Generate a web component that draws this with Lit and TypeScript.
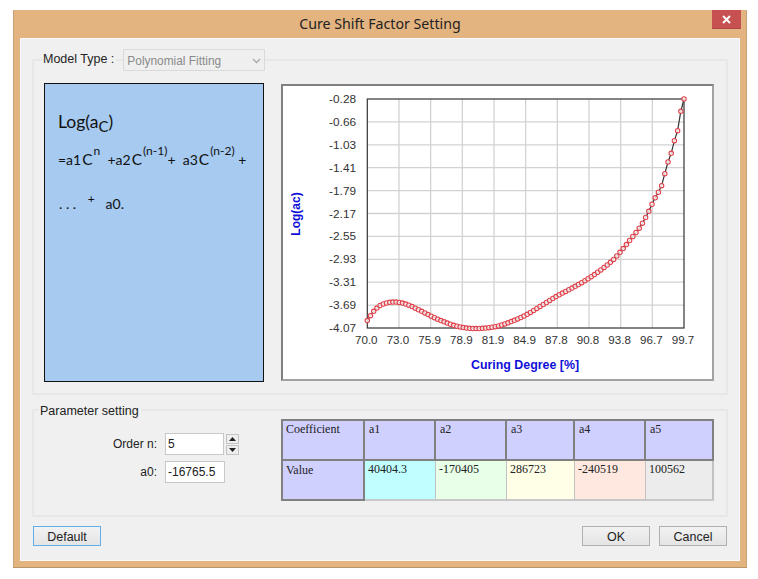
import { html, svg, css, LitElement } from 'lit';
import { customElement } from 'lit/decorators.js';

// curve read off the chart, in page pixels
const KEYS: [number, number][] = [
  [367, 321], [374, 311], [382, 304.5], [395, 302], [407, 304.5], [420, 310.5], [433, 317], [447, 323],
  [460, 327], [473, 328.5], [486, 328], [500, 325.5], [523, 316.5], [540, 306.5], [557, 296], [574, 287], [590, 277.5],
  [602, 269], [613, 260], [622, 250], [630, 240], [640, 227], [648, 213], [654, 200], [658, 193], [662, 184.5],
  [667, 165], [671, 154], [674, 142], [678, 129], [680, 115], [684, 99],
];

function curveY(x: number) {
  let i = 0;
  while (i < KEYS.length - 2 && x > KEYS[i + 1][0]) i++;
  const [x0, y0] = KEYS[i];
  const [x1, y1] = KEYS[i + 1];
  const prev = KEYS[Math.max(i - 1, 0)];
  const next = KEYS[Math.min(i + 2, KEYS.length - 1)];
  const m0 = (y1 - prev[1]) / (x1 - prev[0]);
  const m1 = (next[1] - y0) / (next[0] - x0);
  const h = x1 - x0;
  const t = (x - x0) / h;
  return (2 * t ** 3 - 3 * t ** 2 + 1) * y0 + (t ** 3 - 2 * t ** 2 + t) * h * m0
    + (-2 * t ** 3 + 3 * t ** 2) * y1 + (t ** 3 - t ** 2) * h * m1;
}

const POINTS = Array.from({ length: 100 }, (_, i) => {
  const x = 367.3 + (i * 316.7) / 99;
  return [x, curveY(x)];
});

const Y_LABELS = ['-0.28', '-0.66', '-1.03', '-1.41', '-1.79', '-2.17', '-2.55', '-2.93', '-3.31', '-3.69', '-4.07'];
const X_LABELS = ['70.0', '73.0', '75.9', '78.9', '81.9', '84.9', '87.8', '90.8', '93.8', '96.7', '99.7'];
const LEFT = 367.3, RIGHT = 684, TOP = 99, BOTTOM = 328;
const yAt = (i: number) => TOP + (i * (BOTTOM - TOP)) / 10;
const xAt = (i: number) => LEFT + (i * (RIGHT - LEFT)) / 10;

@customElement('app-root')
export class AppRoot extends LitElement {
  static styles = css`
    :host {
      display: block;
      width: 758px;
      height: 579px;
      box-sizing: border-box;
      padding: 10px 11px 11px 13px;
      background: #fff;
      font-family: "Liberation Sans", Arial, sans-serif;
      font-size: 12.5px;
      color: #222;
    }
    .window {
      height: 100%;
      display: flex;
      flex-direction: column;
      background: #e3b480;
      box-shadow: inset 0 -1px 0 #b8966c, inset 1px 0 0 #c9a274, inset -1px 0 0 #c9a274;
    }
    .titlebar {
      display: grid;
      grid-template-columns: 1fr auto 1fr;
      height: 28px;
      flex: none;
    }
    .title {
      grid-column: 2;
      font-family: "Noto Sans", sans-serif;
      font-size: 14.2px;
      line-height: 28px;
      color: #222;
    }
    .close {
      grid-column: 3;
      justify-self: end;
      width: 29px;
      height: 19px;
      margin-right: 6px;
      background: #c75050;
      border-bottom: 1px solid #b04545;
      box-sizing: border-box;
      display: flex;
      align-items: center;
      justify-content: center;
    }
    .body {
      flex: 1;
      margin: 0 7px 7px;
      padding: 20px 11px 0;
      background: #f0f0f0;
      border: 1px solid #fafafa;
      display: flex;
      flex-direction: column;
    }
    .group {
      border: 2px solid #e7e7e7;
      box-sizing: border-box;
      width: 696px;
    }
    .model {
      height: 336px;
      padding-left: 10px;
    }
    .legend {
      display: flex;
      align-items: center;
      height: 22px;
      margin-top: -12px;
    }
    .legend label {
      background: #f0f0f0;
      margin-left: -1px;
      padding: 0 2px 3px 0;
      margin-right: 7px;
      line-height: 16px;
    }
    .select {
      width: 142px;
      height: 22px;
      box-sizing: border-box;
      border: 1px solid #dadada;
      background: #efefef;
      color: #8a8a8a;
      padding: 2px 0 0 3px;
      display: flex;
      align-items: center;
      justify-content: space-between;
      font-size: 11.9px;
    }
    .select svg {
      margin-right: 3px;
    }
    .model-row {
      display: flex;
      align-items: center;
      gap: 17px;
      margin-top: 12px;
    }
    .formula {
      width: 220px;
      height: 299px;
      box-sizing: border-box;
      border: 1px solid #111;
      background: #a6caf0;
      padding: 26px 0 0 13px;
      font-family: Lato, "Noto Sans", sans-serif;
      color: #111;
    }
    .log {
      font-size: 17.5px;
      line-height: 24px;
    }
    .log sub {
      font-size: 15px;
      vertical-align: -4px;
      line-height: 0;
    }
    .line {
      font-size: 14px;
      white-space: pre;
      line-height: 20px;
      margin-top: 15px;
    }
    .line.last {
      margin-top: 24px;
      padding-left: 1px;
    }
    .line b {
      font-weight: 400;
      font-size: 15.5px;
      margin-left: 1px;
    }
    .line sup {
      font-size: 12px;
      line-height: 0;
      vertical-align: 10px;
      margin-left: 1px;
    }
    .line.last sup {
      vertical-align: 6px;
    }
    .chart {
      width: 433px;
      height: 297px;
      box-sizing: border-box;
      border: 2px solid #8c8c8c;
      border-color: #808080 #a2a2a2 #a2a2a2 #808080;
      background: #fff;
    }
    .chart svg {
      display: block;
      font-family: "Liberation Sans", Arial, sans-serif;
    }
    .param {
      height: 108px;
      margin-top: 14px;
      padding-top: 8px;
    }
    .param-legend {
      width: fit-content;
      height: 16px;
      line-height: 16px;
      margin: -16px 0 0 4px;
      padding: 0 2px;
      background: #f0f0f0;
    }
    .param-row {
      display: flex;
    }
    .fields {
      display: grid;
      grid-template-columns: 123px 60px auto;
      grid-auto-rows: 22px;
      row-gap: 6px;
      column-gap: 8px;
      width: 247px;
      margin-top: 14px;
      flex: none;
      align-items: center;
      align-self: flex-start;
      text-align: right;
      font-size: 12px;
    }
    .fields input {
      width: 60px;
      height: 22px;
      box-sizing: border-box;
      border: 1px solid #c8c8c8;
      padding: 0 2px;
      margin: 0;
      font: inherit;
      color: #222;
      background: #fff;
    }
    .fields input.short {
      width: 59px;
    }
    .spin {
      display: flex;
      flex-direction: column;
      gap: 1px;
      margin-left: -7px;
    }
    .spin span {
      width: 13px;
      height: 10px;
      box-sizing: border-box;
      border: 1px solid #c4c4c4;
      background: #eee;
      display: flex;
      align-items: center;
      justify-content: center;
    }
    .table {
      display: grid;
      grid-template-columns: 82px 71px 71px 68px 71px 68px;
      grid-template-rows: 40px 40px;
      width: 433px;
      height: 82px;
      flex: none;
      box-sizing: border-box;
      border-left: 2px solid #808080;
      border-top: 2px solid #808080;
      font-family: "Liberation Serif", "Times New Roman", serif;
      font-size: 12px;
      color: #222;
    }
    .cell {
      padding: 1px 4px;
      border-right: 2px solid #808080;
      border-bottom: 2px solid #808080;
      background: #d0d0ff;
      box-sizing: border-box;
      line-height: 14px;
    }
    .cell.head {
      padding-left: 3px;
    }
    .cell.row-head {
      padding: 2px 3px;
    }
    .cell.val {
      padding: 1px 3px;
      border-right: 1px solid #c2c2c2;
      border-bottom: 2px solid #c8c8c8;
    }
    .cell.val:last-child {
      border-right-width: 2px;
    }
    .actions {
      display: flex;
      gap: 9px;
      margin: 9px 1px 0;
    }
    .actions button {
      width: 68px;
      height: 20px;
      box-sizing: border-box;
      padding: 1px 0 0;
      border: 1px solid #b0b0b0;
      background: linear-gradient(#f2f2f2, #e4e4e4);
      font: inherit;
      color: #222;
    }
    .actions button.default {
      border-color: #62aee8;
      margin-right: auto;
    }
  `;

  renderChart() {
    const line = POINTS.map((p) => p.join(',')).join(' ');
    return html`<svg width="429" height="293" viewBox="283 86 429 293">
      ${Y_LABELS.map((_, i) => i > 0 && i < 10
        ? svg`<line x1=${LEFT} x2=${RIGHT} y1=${yAt(i)} y2=${yAt(i)} stroke="#d2d2d2" stroke-width="1.3" />` : '')}
      ${X_LABELS.map((_, i) => i > 0 && i < 10
        ? svg`<line x1=${xAt(i)} x2=${xAt(i)} y1=${TOP} y2=${BOTTOM} stroke="#d2d2d2" stroke-width="1.3" />` : '')}
      <rect x=${LEFT} y=${TOP} width=${RIGHT - LEFT} height=${BOTTOM - TOP} fill="none" stroke="#333" stroke-width="1.2" />
      ${Y_LABELS.map((t, i) => svg`<text x="356" y=${yAt(i) + 4} text-anchor="end" font-size="11.8" fill="#333">${t}</text>`)}
      ${X_LABELS.map((t, i) => svg`<text x=${xAt(i) - 1} y="344" text-anchor="middle" font-size="11.6" fill="#333">${t}</text>`)}
      <polyline points=${line} fill="none" stroke="#333" stroke-width="1.2" />
      ${POINTS.map(([x, y]) => svg`<circle cx=${x} cy=${y} r="2.2" fill="#fff" fill-opacity="0.8" stroke="#e0404a" stroke-width="1.1" />`)}
      <text x="525" y="369" text-anchor="middle" font-size="12.4" font-weight="700" fill="#0f0fd8">Curing Degree [%]</text>
      <text transform="translate(300 214) rotate(-90)" text-anchor="middle" font-size="12" font-weight="700" fill="#0f0fd8">Log(ac)</text>
    </svg>`;
  }

  render() {
    const values = [
      ['40404.3', '#c0ffff'],
      ['-170405', '#e8ffe8'],
      ['286723', '#ffffe8'],
      ['-240519', '#ffe8e0'],
      ['100562', '#ececec'],
    ];
    return html`
      <div class="window">
        <div class="titlebar">
          <div class="title">Cure Shift Factor Setting</div>
          <div class="close">
            <svg width="9" height="9" viewBox="0 0 9 9"><path d="M1 1L8 8M8 1L1 8" stroke="#fff" stroke-width="2" /></svg>
          </div>
        </div>
        <div class="body">
          <div class="group model">
            <div class="legend">
              <label>Model Type :</label>
              <div class="select">
                Polynomial Fitting
                <svg width="9" height="6" viewBox="0 0 9 6"><path d="M1 1L4.5 4.5L8 1" fill="none" stroke="#a8a8a8" stroke-width="1.3" /></svg>
              </div>
            </div>
            <div class="model-row">
              <div class="formula">
                <div class="log">Log(a<sub>C</sub>)</div>
                <div class="line">=a1<b>C</b><sup>n</sup>  +a2<b>C</b><sup>(n-1)</sup>+  a3<b>C</b><sup>(n-2)</sup> +</div>
                <div class="line last">. . .   <sup>+</sup>   a0.</div>
              </div>
              <div class="chart">${this.renderChart()}</div>
            </div>
          </div>
          <div class="group param">
            <div class="param-legend">Parameter setting</div>
            <div class="param-row">
              <div class="fields">
                <span>Order n:</span>
                <input class="short" value="5" />
                <div class="spin">
                  <span><svg width="7" height="4" viewBox="0 0 7 4"><path d="M3.5 0L7 4H0Z" fill="#222" /></svg></span>
                  <span><svg width="7" height="4" viewBox="0 0 7 4"><path d="M0 0H7L3.5 4Z" fill="#222" /></svg></span>
                </div>
                <span>a0:</span>
                <input value="-16765.5" />
              </div>
              <div class="table">
                <div class="cell head">Coefficient</div>
                ${['a1', 'a2', 'a3', 'a4', 'a5'].map((t) => html`<div class="cell">${t}</div>`)}
                <div class="cell row-head">Value</div>
                ${values.map(([t, c]) => html`<div class="cell val" style="background:${c}">${t}</div>`)}
              </div>
            </div>
          </div>
          <div class="actions">
            <button class="default">Default</button>
            <button>OK</button>
            <button>Cancel</button>
          </div>
        </div>
      </div>
    `;
  }
}
